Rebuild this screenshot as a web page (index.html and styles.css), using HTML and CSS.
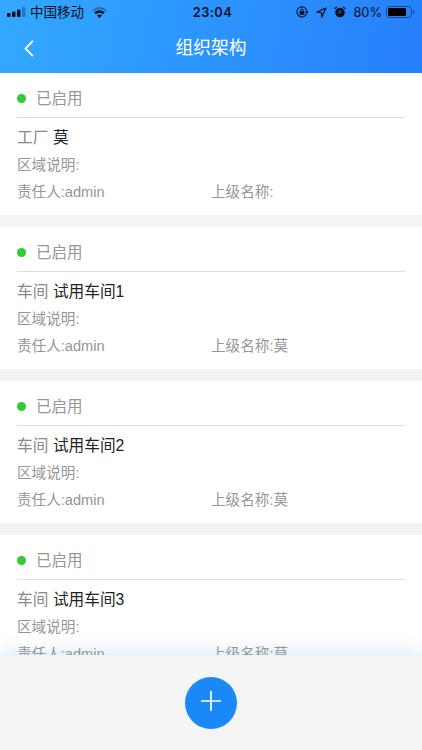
FILE: index.html
```
<!DOCTYPE html>
<html lang="zh-CN">
<head>
<meta charset="utf-8">
<meta name="viewport" content="width=device-width, initial-scale=1">
<title>组织架构</title>
<link rel="stylesheet" href="styles.css">
</head>
<body>
<div class="app">
  <header class="header">
    <div class="status-bar">
      <div class="status-left">
        <svg class="signal" width="19" height="10" viewBox="0 0 19 10"><rect x="0" y="6" width="3.5" height="4" rx="1"/><rect x="5" y="4.5" width="3.5" height="5.5" rx="1"/><rect x="10" y="2.5" width="3.5" height="7.5" rx="1"/><rect x="15" y="0" width="3.5" height="10" rx="1" opacity=".3"/></svg>
        <span class="carrier">中国移动</span>
        <svg class="wifi" width="15" height="11" viewBox="0 0 15 11" fill="none" stroke="#07121f"><path d="M.8 3.9Q7.5-1.8 14.2 3.9" stroke-width="1.8" opacity=".35"/><path d="M3 6.2Q7.5 2.6 12 6.2" stroke-width="2.4"/><path d="M4.9 8.5Q7.5 6.5 10.1 8.5L7.5 11Z" fill="#07121f" stroke="none"/></svg>
      </div>
      <span class="clock">23:04</span>
      <div class="status-right">
        <svg width="13" height="12" viewBox="0 0 13 12" fill="none" stroke="#07121f"><path d="M10.6 7.6A5 5 0 1 1 10.8 5" stroke-width="1.1"/><path d="M9 5.2h3.8L10.9 7.7Z" fill="#07121f" stroke="none"/><rect x="3.6" y="5.1" width="4.8" height="3.6" rx=".5" fill="#07121f" stroke="none"/><path d="M4.7 5.5V4.3a1.3 1.3 0 0 1 2.6 0v1.2" stroke-width=".9"/></svg>
        <svg class="location" width="11" height="11" viewBox="0 0 11 11" fill="none" stroke="#07121f" stroke-width="1.2" stroke-linejoin="round"><path d="M10 1L.9 5.1l4.5.5.5 4.5Z"/></svg>
        <svg class="alarm" width="12" height="12" viewBox="0 0 12 12"><circle cx="6" cy="6.5" r="4.8"/><path d="M.8 3.1Q1.2 1.1 3.2 1M11.2 3.1Q10.8 1.1 8.8 1" fill="none" stroke="#07121f" stroke-width="1.2"/><path d="M6.1 4v2.8H4.4" fill="none" stroke="#3191fd" stroke-width=".8"/></svg>
        <span class="percent">80%</span>
        <svg class="battery" width="29" height="12" viewBox="0 0 29 12"><rect x=".5" y=".5" width="25" height="11" rx="3" fill="none" stroke="#07121f" stroke-opacity=".5"/><rect x="2" y="2" width="18" height="8" rx="1" fill="#000"/><path d="M27 4q3 2 0 4Z" opacity=".5"/></svg>
      </div>
    </div>
    <nav class="nav-bar">
      <svg class="back" width="10" height="17" viewBox="0 0 10 17" fill="none" stroke="#fff" stroke-width="1.8"><path d="M8.9.9L1.5 8.5l7.4 7.6"/></svg>
      <h1 class="nav-title">组织架构</h1>
    </nav>
  </header>

  <main class="list">
    <article class="card">
      <div class="card-status"><i class="dot"></i>已启用</div>
      <h2 class="card-title"><span class="kind">工厂</span><span>莫</span></h2>
      <p class="desc">区域说明:</p>
      <div class="meta"><span>责任人:admin</span><span>上级名称:</span></div>
    </article>
    <article class="card">
      <div class="card-status"><i class="dot"></i>已启用</div>
      <h2 class="card-title"><span class="kind">车间</span><span>试用车间1</span></h2>
      <p class="desc">区域说明:</p>
      <div class="meta"><span>责任人:admin</span><span>上级名称:莫</span></div>
    </article>
    <article class="card">
      <div class="card-status"><i class="dot"></i>已启用</div>
      <h2 class="card-title"><span class="kind">车间</span><span>试用车间2</span></h2>
      <p class="desc">区域说明:</p>
      <div class="meta"><span>责任人:admin</span><span>上级名称:莫</span></div>
    </article>
    <article class="card">
      <div class="card-status"><i class="dot"></i>已启用</div>
      <h2 class="card-title"><span class="kind">车间</span><span>试用车间3</span></h2>
      <p class="desc">区域说明:</p>
      <div class="meta"><span>责任人:admin</span><span>上级名称:莫</span></div>
    </article>
  </main>

  <footer class="footer">
    <button class="add" aria-label="添加"><svg width="20" height="20" viewBox="0 0 20 20" stroke="#fff" stroke-width="1.7"><path d="M10 0v20M0 10h20"/></svg></button>
  </footer>
</div>
</body>
</html>
```
FILE: styles.css
```
* { box-sizing: border-box; }

body {
  margin: 0;
  font-family: "Liberation Sans", "Noto Sans CJK SC", sans-serif;
  color: #222;
  background: #f4f4f4;
}

.app {
  display: flex;
  flex-direction: column;
  height: 750px;
  overflow: hidden;
}

.header {
  flex: none;
  height: 73px;
  background: linear-gradient(100deg, #33a9ff, #267ffc);
}

.status-bar {
  display: grid;
  grid-template-columns: 1fr auto 1fr;
  align-items: center;
  height: 24px;
  padding: 0 7px;
  color: #07121f;
  fill: #07121f;
}

.status-left,
.status-right { display: flex; align-items: center; }

.status-right { justify-content: flex-end; }

.carrier {
  margin-left: 4px;
  padding-top: 1px;
  font-size: 13.5px;
  line-height: 20px;
}

.wifi { margin-left: 8px; }

.clock {
  font-family: Inter, sans-serif;
  font-size: 12.8px;
  font-weight: 600;
  letter-spacing: 0.5px;
  transform: translateX(1.5px);
}

.location { margin-left: 7px; }
.alarm { margin-left: 7px; }

.percent {
  margin-left: 7px;
  font-family: Inter, sans-serif;
  font-size: 12.8px;
}

.battery { margin-left: 4px; }

.nav-bar {
  display: grid;
  grid-template-columns: 60px 1fr 60px;
  align-items: center;
  height: 48px;
}

.back { margin-left: 24px; }

.nav-title {
  margin: 0;
  font-size: 17.7px;
  font-weight: 400;
  line-height: 26px;
  text-align: center;
  color: #fff;
}

.list {
  flex: 1;
  min-height: 0;
  display: flex;
  flex-direction: column;
  gap: 12px;
  overflow: hidden;
}

.card {
  flex: none;
  height: 142px;
  padding: 0 17px;
  background: #fff;
}

.card-status {
  display: flex;
  align-items: center;
  height: 45px;
  padding-top: 7px;
  border-bottom: 1px solid #dedede;
  font-size: 15.5px;
  line-height: 23px;
  color: #969696;
}

.dot {
  width: 9px;
  height: 9px;
  margin: 0 10px 1px 0;
  border-radius: 50%;
  background: #32cb32;
}

.card-title {
  display: flex;
  gap: 4.5px;
  margin: 6px 0 1px;
  font-size: 15.7px;
  font-weight: 400;
  line-height: 27px;
}

.kind { color: #888; }

.desc,
.meta {
  margin: 0;
  font-size: 14.6px;
  line-height: 27px;
  color: #969696;
}

.meta {
  display: grid;
  grid-template-columns: 1fr 1fr;
}

.footer {
  position: relative;
  flex: none;
  display: flex;
  justify-content: center;
  height: 95px;
  padding-top: 22px;
  background: #f4f4f4;
  box-shadow: 0 0 18px rgba(110, 175, 220, 0.38);
}

.add {
  display: flex;
  justify-content: center;
  width: 52px;
  height: 52px;
  padding: 14px 0 0;
  border: 0;
  border-radius: 50%;
  background: #1989fa;
}
```
